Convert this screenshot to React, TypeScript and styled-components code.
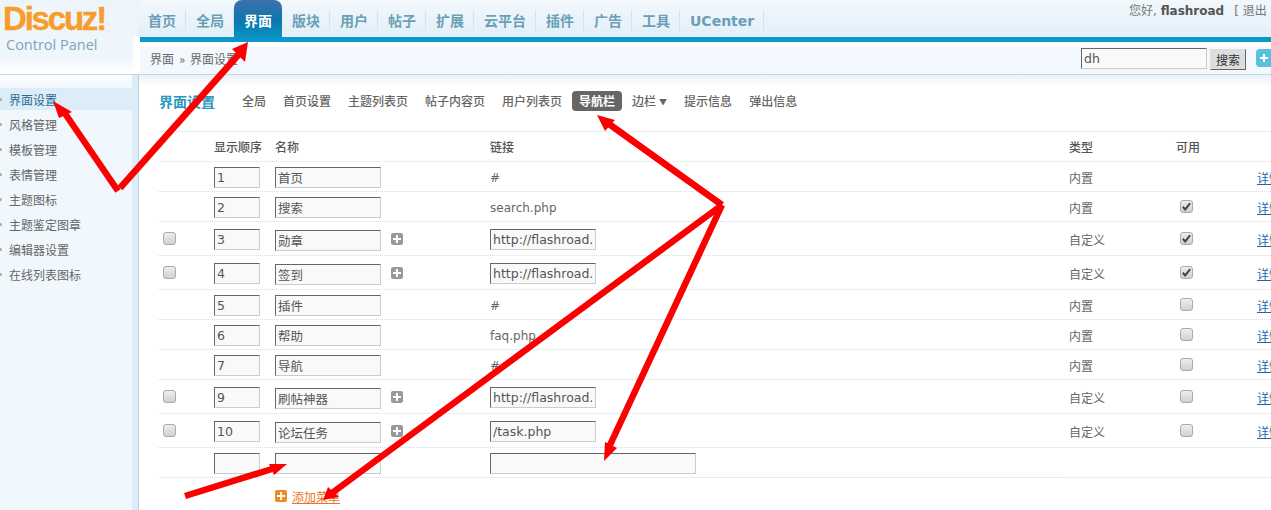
import React from 'react';
import styled, { createGlobalStyle } from 'styled-components';

const Global = createGlobalStyle`
  html, body { margin: 0; padding: 0; background: #fff; }
  body { font: 12px "DejaVu Sans", "Noto Sans CJK SC", sans-serif; color: #666; }
  * { box-sizing: border-box; }
`;

const Page = styled.div`
  position: relative;
  width: 1271px;
  height: 510px;
  overflow: hidden;
  display: grid;
  grid-template-columns: 139px 1132px;
`;

const Aside = styled.aside`
  display: flex;
  flex-direction: column;
  height: 510px;
`;

const Logo = styled.div`
  height: 75px;
  padding: 1px 0 0 3px;
  border-bottom: 1px solid #c3d6e4;
  background: linear-gradient(to bottom, #edf5fb 0%, #eff7fc 78%, #fbfdfe 93%, #fff 100%);
  margin-right: -1px;
  position: relative;
  &::after {
    content: '';
    position: absolute;
    top: 0;
    bottom: 0;
    right: 0;
    width: 7px;
    background: linear-gradient(to bottom, #edf5fb 0, #edf5fb 36px, #fff 37px);
  }
`;

const LogoMark = styled.div`
  font: bold 33px/36px "Liberation Sans", sans-serif;
  letter-spacing: -2.2px;
  color: #f89c2c;
  -webkit-text-stroke: 0.4px #f89c2c;
`;

const LogoSub = styled.div`
  font: 14.5px/16px "Open Sans", sans-serif;
  color: #7ba6b5;
  margin: 0 0 0 3px;
`;

const SideBody = styled.div`
  flex: 1;
  border-right: 1px solid #bcd2e2;
`;

const SideInner = styled.div`
  height: 100%;
  border-right: 6px solid #dcedf7;
  padding-top: 13px;
  background: linear-gradient(to bottom, #fdfeff 0, #f1f8fd 14px);
`;

const SideItem = styled.div<{ $active?: boolean }>`
  height: 22px;
  margin-bottom: 3px;
  display: flex;
  align-items: center;
  gap: 7px;
  font-family: "Noto Sans CJK SC", sans-serif;
  color: ${(p) => (p.$active ? '#2a6a97' : '#666')};
  background: ${(p) => (p.$active ? '#dcedf7' : 'transparent')};
  &::before {
    content: '';
    width: 3px;
    height: 3px;
    margin-left: -1px;
    border-radius: 50%;
    background: #aaa;
  }
`;

const Main = styled.main`
  display: flex;
  flex-direction: column;
  min-width: 0;
`;

const TopBar = styled.header`
  height: 37px;
  display: flex;
  background: linear-gradient(to bottom, #f2f8fc, #e2eff8);
  margin-left: -1px;
  position: relative;
`;

const Tab = styled.div<{ $active?: boolean }>`
  height: ${(p) => (p.$active ? '42px' : '37px')};
  padding: 13px 10px 0 10px;
  font: bold 14px/16px "DejaVu Sans", "Noto Sans CJK SC", sans-serif;
  white-space: nowrap;
  flex: none;
  z-index: 1;
  color: ${(p) => (p.$active ? '#fff' : '#6a9fb6')};
  border-radius: ${(p) => (p.$active ? '8px 8px 0 0' : '0')};
  background: ${(p) =>
    p.$active
      ? 'linear-gradient(to bottom, #3c74ad 0, #2f72ab 6px, #0d76ae 20px, #0a9ac9 42px)'
      : 'linear-gradient(to bottom, transparent 10px, #d5e3ec 10px, #d5e3ec 31px, transparent 31px) right / 1px 100% no-repeat'};
`;

const UserBox = styled.div`
  position: absolute;
  left: 991px;
  top: 3px;
  white-space: nowrap;
  color: #777;
  line-height: 16px;
  b { color: #555; margin-right: 10px; }
`;

const TealBar = styled.div`
  height: 5px;
  background: #0a9ac9;
  flex: none;
`;

const Crumb = styled.div`
  margin-top: 5px;
  height: 28px;
  padding: 1px 0 0 11px;
  display: flex;
  align-items: flex-start;
  background: #f2f8fd;
  border-bottom: 1px solid #c3d6e4;
  font-family: "Noto Sans CJK SC", sans-serif;
  color: #666;
  flex: none;
`;

const CrumbText = styled.span`
  flex: none;
  width: 931px;
  line-height: 21px;
  word-spacing: 2.5px;
`;

const SearchInput = styled.input`
  width: 126px;
  height: 21px;
  flex: none;
  font: 12.5px "DejaVu Sans", sans-serif;
  color: #555;
  padding: 0 2px;
  background: #f9f9f9;
  border: 1px solid;
  border-color: #666 #ccc #ccc #666;
  outline: none;
`;

const SearchBtn = styled.button`
  width: 36px;
  height: 21px;
  flex: none;
  margin: 1px 0 0 3px;
  padding: 0;
  font: 12px "Noto Sans CJK SC", sans-serif;
  color: #333;
  background: #ddd;
  border: 1px solid;
  border-color: #ddd #666 #666 #ddd;
`;

const PlusBtn = styled.div`
  width: 24px;
  height: 18px;
  margin: 1px 0 0 10px;
  flex: none;
  border-radius: 4px;
  background: #5cc0dc;
  color: #fff;
  padding: 5px 0 0 4px;
  display: flex;
`;

const Content = styled.div`
  flex: 1;
  padding: 0 0 0 20px;
  background: linear-gradient(to bottom, #e9f2f8 0, #fff 11px);
`;

const Title = styled.div`
  height: 56px;
  display: flex;
  align-items: center;
  padding-bottom: 5px;
`;

const TitleText = styled.h3`
  margin: 0 21px 0 0;
  width: 56px;
  font: bold 14px/16px "Noto Sans CJK SC", sans-serif;
  color: #2a96c0;
  white-space: nowrap;
`;

const SubTab = styled.div<{ $active?: boolean }>`
  height: 20px;
  padding: 0 ${(p) => (p.$active ? '7px' : '6px')};
  margin: 0 ${(p) => (p.$active ? '4px' : '5px')} 0 ${(p) => (p.$active ? '-1px' : '0')};
  font: ${(p) => (p.$active ? 'bold' : '500')} 12px/20px "Noto Sans CJK SC", sans-serif;
  white-space: nowrap;
  color: ${(p) => (p.$active ? '#fff' : '#666')};
  background: ${(p) => (p.$active ? '#666' : 'transparent')};
  border-radius: 4px;
`;

const Caret = styled.span`
  font-size: 8px;
  margin-left: 3px;
  vertical-align: 1px;
`;

const Table = styled.div`
  border-top: 1px dotted #d5dde3;
  width: 1113px;
  margin-left: -1px;
`;

const Row = styled.div<{ $h: number }>`
  height: ${(p) => p.$h}px;
  display: grid;
  grid-template-columns: 56px 61px 215px 579px 107px 81px 14px;
  border-bottom: 1px dotted #d5dde3;
`;

const HeadCell = styled.div`
  display: flex;
  align-items: center;
  font: 500 12px "Noto Sans CJK SC", sans-serif;
  color: #555;
  white-space: nowrap;
`;

const Cell = styled.div<{ $shift?: number; $solid?: boolean }>`
  display: flex;
  align-items: center;
  min-width: 0;
  white-space: nowrap;
  padding-top: ${(p) => p.$shift ?? 0}px;
  ${(p) => p.$solid && 'margin-bottom: -1px; border-bottom: 1px solid #e4eef5; background: #fff;'}
`;

const InputCell = styled.div<{ $tall?: boolean; $plus?: number; $solid?: boolean }>`
  display: flex;
  align-items: flex-start;
  gap: 10px;
  padding-top: ${(p) => (p.$tall ? 7 + (p.$plus ?? 0) : 5)}px;
  ${(p) => p.$solid && 'margin-bottom: -1px; border-bottom: 1px solid #e4eef5; background: #fff;'}
`;

const Txt = styled.input<{ $w: number }>`
  width: ${(p) => p.$w}px;
  height: 21px;
  padding: 0 2px;
  flex: none;
  font: 12.5px "DejaVu Sans", "Noto Sans CJK SC", sans-serif;
  color: #555;
  background: #f9f9f9;
  border: 1px solid;
  border-color: #666 #ccc #ccc #666;
  outline: none;
`;

const CjkText = styled.span`
  font-family: "Noto Sans CJK SC", sans-serif;
  color: #666;
`;

const DetailLink = styled.a`
  font-family: "Noto Sans CJK SC", sans-serif;
  color: #2366a8;
  text-decoration: underline;
`;

const Check = styled.span<{ $left?: boolean }>`
  width: 13px;
  height: 13px;
  margin-left: ${(p) => (p.$left ? '5px' : '4px')};
  flex: none;
  border: 1px solid #aaa;
  border-radius: 3px;
  background: linear-gradient(to bottom, #eee, #d0d0d0);
  display: flex;
  align-items: center;
  justify-content: center;
`;

const PlusIcon = styled.span<{ $orange?: boolean }>`
  width: 12px;
  height: 12px;
  margin-top: ${(p) => (p.$orange ? '0' : '3px')};
  flex: none;
  border-radius: 2px;
  background: ${(p) => (p.$orange ? '#ee8a1e' : '#999')};
  display: flex;
  align-items: center;
  justify-content: center;
`;

const AddRow = styled.div`
  display: flex;
  align-items: center;
  gap: 5px;
  padding: 6px 0 0 116px;
  height: 30px;
`;

const AddLink = styled.a`
  font-family: "Noto Sans CJK SC", sans-serif;
  color: #e8742a;
  text-decoration: underline;
`;

const Arrows = styled.svg`
  position: absolute;
  inset: 0;
  pointer-events: none;
`;

const PlusGlyph = () => (
  <svg width="8" height="8" viewBox="0 0 8 8">
    <path d="M3 0h2v3h3v2H5v3H3V5H0V3h3z" fill="#fff" />
  </svg>
);

const Tick = () => (
  <svg width="9" height="9" viewBox="0 0 9 9">
    <path d="M0.8 4.8 L3.2 7.4 L8.2 1.2" fill="none" stroke="#444" strokeWidth="2" />
  </svg>
);

const tabs = ['首页', '全局', '界面', '版块', '用户', '帖子', '扩展', '云平台', '插件', '广告', '工具', 'UCenter'];
const side = ['界面设置', '风格管理', '模板管理', '表情管理', '主题图标', '主题鉴定图章', '编辑器设置', '在线列表图标'];
const subs = ['全局', '首页设置', '主题列表页', '帖子内容页', '用户列表页', '导航栏', '边栏', '提示信息', '弹出信息'];

type R = { n: string; name: string; link: string; input?: boolean; custom?: boolean; on?: boolean; noBox?: boolean };
const rows: R[] = [
  { n: '1', name: '首页', link: '#', noBox: true },
  { n: '2', name: '搜索', link: 'search.php', on: true },
  { n: '3', name: '勋章', link: 'http://flashroad.com/medal.php', input: true, custom: true, on: true },
  { n: '4', name: '签到', link: 'http://flashroad.com/sign.php', input: true, custom: true, on: true },
  { n: '5', name: '插件', link: '#' },
  { n: '6', name: '帮助', link: 'faq.php' },
  { n: '7', name: '导航', link: '#' },
  { n: '9', name: '刷帖神器', link: 'http://flashroad.com/shua.php', input: true, custom: true },
  { n: '10', name: '论坛任务', link: '/task.php', input: true, custom: true },
];

export default function App() {
  return (
    <Page>
      <Global />
      <Aside>
        <Logo>
          <LogoMark>Discuz!</LogoMark>
          <LogoSub>Control Panel</LogoSub>
        </Logo>
        <SideBody>
          <SideInner>
            {side.map((s, i) => (
              <SideItem key={s} $active={i === 0}>{s}</SideItem>
            ))}
          </SideInner>
        </SideBody>
      </Aside>
      <Main>
        <TopBar>
          {tabs.map((t) => (
            <Tab key={t} $active={t === '界面'}>{t}</Tab>
          ))}
          <UserBox>
            您好, <b>flashroad</b>[ 退出
          </UserBox>
        </TopBar>
        <TealBar />
        <Crumb>
          <CrumbText>界面 » 界面设置</CrumbText>
          <SearchInput defaultValue="dh" />
          <SearchBtn>搜索</SearchBtn>
          <PlusBtn><PlusGlyph /></PlusBtn>
        </Crumb>
        <Content>
          <Title>
            <TitleText>界面设置</TitleText>
            {subs.map((s) => (
              <SubTab key={s} $active={s === '导航栏'}>
                {s}
                {s === '边栏' && <Caret>▼</Caret>}
              </SubTab>
            ))}
          </Title>
          <Table>
            <Row $h={30}>
              <HeadCell />
              <HeadCell>显示顺序</HeadCell>
              <HeadCell>名称</HeadCell>
              <HeadCell>链接</HeadCell>
              <HeadCell>类型</HeadCell>
              <HeadCell>可用</HeadCell>
              <HeadCell />
            </Row>
            {rows.map((r) => {
              const tall = !!r.custom;
              const tail = r.n === '10';
              return (
                <Row key={r.n} $h={tall ? 34 : 30}>
                  <Cell>{r.custom && <Check $left />}</Cell>
                  <InputCell $tall={tall}><Txt $w={46} defaultValue={r.n} /></InputCell>
                  <InputCell $tall={tall} $plus={1}>
                    <Txt $w={106} defaultValue={r.name} />
                    {r.custom && <PlusIcon><PlusGlyph /></PlusIcon>}
                  </InputCell>
                  {r.input ? (
                    <InputCell $tall><Txt $w={106} defaultValue={r.link} /></InputCell>
                  ) : (
                    <Cell $shift={2}>{r.link}</Cell>
                  )}
                  <Cell $shift={2}><CjkText>{r.custom ? '自定义' : '内置'}</CjkText></Cell>
                  <Cell $solid={tail}>{!r.noBox && <Check>{r.on && <Tick />}</Check>}</Cell>
                  <Cell $shift={2} $solid={tail}><DetailLink href="#">详情</DetailLink></Cell>
                </Row>
              );
            })}
            <Row $h={30}>
              <Cell />
              <InputCell><Txt $w={46} /></InputCell>
              <InputCell><Txt $w={106} /></InputCell>
              <InputCell $solid><Txt $w={206} /></InputCell>
              <Cell />
              <Cell />
              <Cell />
            </Row>
          </Table>
          <AddRow>
            <PlusIcon $orange><PlusGlyph /></PlusIcon>
            <AddLink href="#">添加菜单</AddLink>
          </AddRow>
        </Content>
      </Main>
      <Arrows width="1271" height="510" viewBox="0 0 1271 510">
        <g stroke="#fb0000" strokeWidth="6.5" fill="none">
          <path d="M64 112 L118 191" />
          <path d="M120 188 L240 53" />
          <path d="M722 205 L609 124" />
          <path d="M722 205 L610 445" />
          <path d="M722 205 L332 493" />
          <path d="M185 496 L272 469" />
        </g>
        <g fill="#fb0000">
          <polygon points="53,101 72,112 59,118" />
          <polygon points="248,42 232,49 245,62" />
          <polygon points="597,115 615,120 605,131" />
          <polygon points="604,461 605,442 617,448" />
          <polygon points="323,500 328,487 339,497" />
          <polygon points="287,464 269,464 274,475" />
        </g>
      </Arrows>
    </Page>
  );
}
